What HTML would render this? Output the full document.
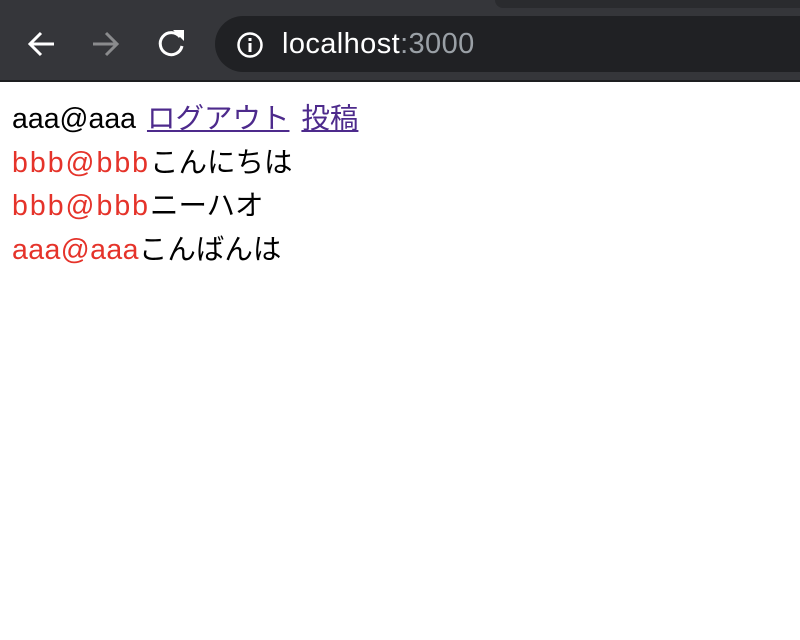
<!DOCTYPE html>
<html><head><meta charset="utf-8"><style>
body{margin:0;width:800px;height:640px;background:#fff;overflow:hidden;font-family:"Liberation Sans","Noto Sans CJK JP",sans-serif}
.bar{position:absolute;left:0;top:0;width:800px;height:80px;background:#35363a}
.tab{position:absolute;left:495px;top:0;width:305px;height:8px;background:#2a2b2e;border-bottom-left-radius:8px}
.line{position:absolute;left:0;top:80px;width:800px;height:2px;background:#1d1e20}
.pill{position:absolute;left:215px;top:16px;width:620px;height:56px;border-radius:28px;background:#202124}
.url{position:absolute;left:282px;top:26px;font-size:29px;letter-spacing:0.4px;color:#fff;line-height:36px}
.url span{color:#9aa0a6}
.c{position:absolute;top:0;left:12px;font-size:28.5px;line-height:43.5px}
.c div{height:43.5px}
.r{color:#e5332a}
.l{letter-spacing:2px}
a{color:#4d2a8c}
</style></head><body>
<div class="bar"></div><div class="tab"></div><div class="line"></div>
<div class="pill"></div>
<svg style="position:absolute;left:0;top:0" width="220" height="80">
<g fill="none" stroke-width="3" stroke-linecap="butt">
<path d="M54 44H30M41 33L30 44L41 55" stroke="#fff"/>
<path d="M93 44H117M106 33L117 44L106 55" stroke="#8a8b8d"/>
<path d="M180 37A11 11 0 1 0 182 46" stroke="#fff"/>
</g>
<path d="M173 30L184 30L184 41Z" fill="#fff"/>
</svg>
<svg style="position:absolute;left:235px;top:30px" width="30" height="30">
<circle cx="15" cy="15" r="11.5" fill="none" stroke="#fff" stroke-width="2.5"/>
<rect x="13.5" y="13" width="3" height="9" fill="#fff"/><rect x="13.5" y="8" width="3" height="3" fill="#fff"/>
</svg>
<div class="url">localhost<span>:3000</span></div>
<div class="c" style="top:98px">
<div>aaa@aaa<span style="letter-spacing:3px"> </span><a href="#">ログアウト</a><span style="letter-spacing:4px"> </span><a href="#">投稿</a></div>
<div><span class="r l">bbb@bbb</span>こんにちは</div>
<div><span class="r l">bbb@bbb</span>ニーハオ</div>
<div><span class="r" style="letter-spacing:0.4px">aaa@aaa</span>こんばんは</div>
</div>
</body></html>
